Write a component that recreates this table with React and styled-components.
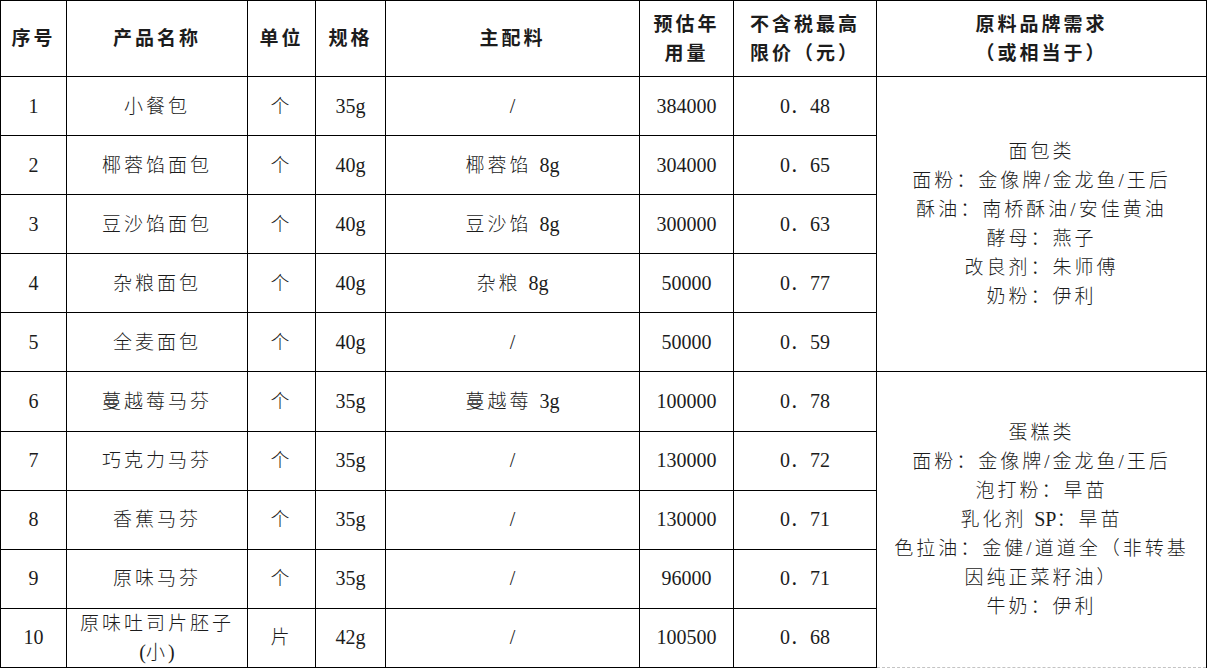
import React from "react";
import styled, { createGlobalStyle } from "styled-components";

const Global = createGlobalStyle`
  html, body { margin: 0; padding: 0; background: #fff; }
  body { font-family: "Liberation Serif", "Noto Sans CJK SC", serif; }
`;

const Table = styled.table`
  border-collapse: collapse;
  table-layout: fixed;
  width: 1206px;
  margin: 0;
  font-family: "Liberation Serif", "Noto Sans CJK SC", serif;
  color: #1c1c1c;
`;

const Th = styled.th`
  border: 1px solid #000;
  height: 75px;
  padding: 0;
  font-size: 19px;
  line-height: 29px;
  font-weight: 700;
  letter-spacing: 3px;
  text-align: center;
  vertical-align: middle;
`;

const Td = styled.td`
  border: 1px solid #000;
  border-bottom: ${(p) => (p.$dashed ? "1px dashed #c4c4c4" : "1px solid #000")};
  height: 58.1px;
  padding: 0;
  font-size: ${(p) => (p.$latin ? "20px" : "19px")};
  line-height: 29px;
  font-weight: 300;
  letter-spacing: ${(p) => (p.$latin ? "0" : "3px")};
  text-align: center;
  vertical-align: middle;
`;

const Latin = styled.span`
  letter-spacing: 0;
  font-size: 20px;
`;

const Lines = styled.div`
  display: flex;
  flex-direction: column;
  align-items: center;
`;

const Line = styled.div`
  white-space: nowrap;
`;

const cols = [66, 181, 68, 70, 254, 94, 143, 330];

const rows = [
  ["1", "小餐包", "个", "35g", null, "384000", "0．48"],
  ["2", "椰蓉馅面包", "个", "40g", ["椰蓉馅", "8g"], "304000", "0．65"],
  ["3", "豆沙馅面包", "个", "40g", ["豆沙馅", "8g"], "300000", "0．63"],
  ["4", "杂粮面包", "个", "40g", ["杂粮", "8g"], "50000", "0．77"],
  ["5", "全麦面包", "个", "40g", null, "50000", "0．59"],
  ["6", "蔓越莓马芬", "个", "35g", ["蔓越莓", "3g"], "100000", "0．78"],
  ["7", "巧克力马芬", "个", "35g", null, "130000", "0．72"],
  ["8", "香蕉马芬", "个", "35g", null, "130000", "0．71"],
  ["9", "原味马芬", "个", "35g", null, "96000", "0．71"],
  ["10", "原味吐司片胚子", "片", "42g", null, "100500", "0．68"],
];

const bread = [
  "面包类",
  "面粉：金像牌/金龙鱼/王后",
  "酥油：南桥酥油/安佳黄油",
  "酵母：燕子",
  "改良剂：朱师傅",
  "奶粉：伊利",
];

const cake = [
  "蛋糕类",
  "面粉：金像牌/金龙鱼/王后",
  "泡打粉：旱苗",
  <>乳化剂 <Latin>SP</Latin>：旱苗</>,
  "色拉油：金健/道道全（非转基",
  "因纯正菜籽油）",
  "牛奶：伊利",
];

function Brand({ lines }) {
  return (
    <Lines>
      {lines.map((l, i) => (
        <Line key={i}>{l}</Line>
      ))}
    </Lines>
  );
}

export default function App() {
  return (
    <>
      <Global />
      <Table>
        <colgroup>
          {cols.map((w, i) => (
            <col key={i} style={{ width: w }} />
          ))}
        </colgroup>
        <thead>
          <tr>
            <Th>序号</Th>
            <Th>产品名称</Th>
            <Th>单位</Th>
            <Th>规格</Th>
            <Th>主配料</Th>
            <Th>预估年<br />用量</Th>
            <Th>不含税最高<br />限价（元）</Th>
            <Th>原料品牌需求<br />（或相当于）</Th>
          </tr>
        </thead>
        <tbody>
          {rows.map((r, i) => (
            <tr key={r[0]}>
              <Td $latin>{r[0]}</Td>
              <Td>
                {r[0] === "10" ? (
                  <>
                    {r[1]}
                    <br />
                    <Latin>(</Latin>小<Latin>)</Latin>
                  </>
                ) : (
                  r[1]
                )}
              </Td>
              <Td>{r[2]}</Td>
              <Td $latin>{r[3]}</Td>
              <Td>
                {r[4] ? (
                  <>
                    {r[4][0]} <Latin>{r[4][1]}</Latin>
                  </>
                ) : (
                  <Latin>/</Latin>
                )}
              </Td>
              <Td $latin>{r[5]}</Td>
              <Td $latin>{r[6]}</Td>
              {i === 0 && (
                <Td rowSpan={5}>
                  <Brand lines={bread} />
                </Td>
              )}
              {i === 5 && (
                <Td rowSpan={5} $dashed>
                  <Brand lines={cake} />
                </Td>
              )}
            </tr>
          ))}
        </tbody>
      </Table>
    </>
  );
}
